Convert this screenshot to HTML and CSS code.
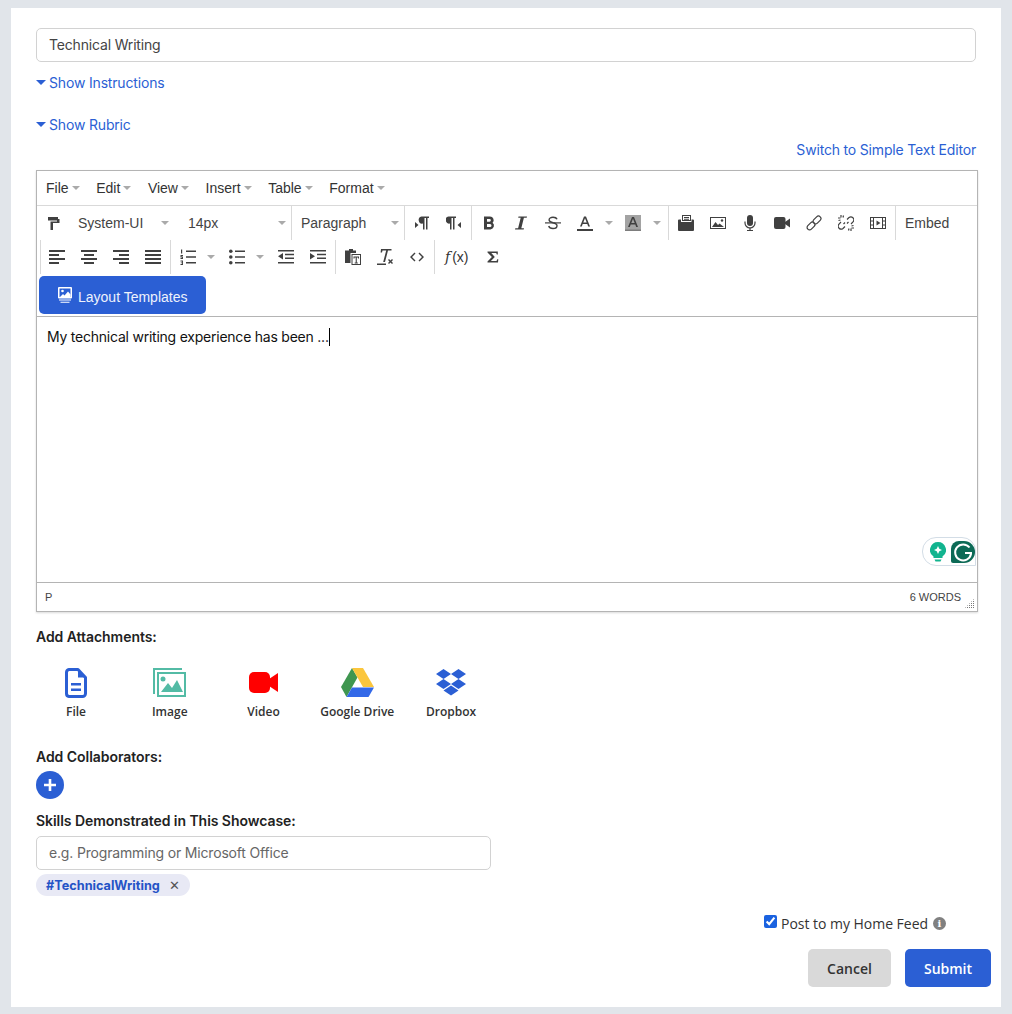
FILE: index.html
```html
<!DOCTYPE html>
<html lang="en">
<head>
<meta charset="utf-8">
<title>Technical Writing</title>
<link rel="stylesheet" href="styles.css">
</head>
<body>
<svg class="sprite" width="0" height="0" aria-hidden="true">
  <symbol id="i-paint" viewBox="0 0 16 16"><path d="M2 2h10v2h1.500v4H7v7H4.500V6.500H11V5.500H2z"/></symbol>
  <symbol id="i-ltr" viewBox="0 0 16 16"><path d="M7.500 1.500H15v1.500h-1.500v11.500H12V3h-1.500v11.500H9V8.500a3.500 3.500 0 0 1-1.500-7zM1 7l3.500 3L1 13z"/></symbol>
  <symbol id="i-rtl" viewBox="0 0 16 16"><path d="M2.500 1.500H10v1.500H8.500v11.500H7V3H5.500v11.500H4V8.500a3.500 3.500 0 0 1-1.500-7zM15 7l-3.500 3 3.500 3z"/></symbol>
  <symbol id="i-bold" viewBox="0 0 16 16"><path fill-rule="evenodd" d="M3 1.500h6a3.700 3.700 0 0 1 2.600 6.300A3.800 3.800 0 0 1 9.500 14.500H3zM6 4v2.700h2.500a1.350 1.350 0 0 0 0-2.700zM6 9v3h3a1.500 1.500 0 0 0 0-3z"/></symbol>
  <symbol id="i-italic" viewBox="0 0 16 16"><path d="M5.500 1.500H14l-.3 1.300h-2.800L8.300 13.200H11l-.3 1.300H2l.3-1.300h2.800L7.700 2.800H5.200z"/></symbol>
  <symbol id="i-strike" viewBox="0 0 16 16"><path d="M0 7.300h16v1.200H0z"/><path d="M12 4.300C11.500 3 10 2.300 8 2.300c-2.300 0-3.900 1-3.900 2.700 0 1.600 1.500 2.100 3.900 2.700 2.400.5 4 1.200 4 3 0 1.800-1.700 2.800-4 2.800-2.200 0-3.900-.9-4.300-2.500" fill="none" stroke="currentColor" stroke-width="1.400"/></symbol>
  <symbol id="i-color" viewBox="0 0 16 16"><path fill-rule="evenodd" d="M7 1.500h2L13 11.500h-1.800l-.9-2.400H5.700l-.9 2.400H3zM6.300 7.600h3.400L8 3.200z"/><path d="M0 14h16v2H0z"/></symbol>
  <symbol id="i-back" viewBox="0 0 16 16"><path d="M0 0h16v16H0z" fill="#a3a3a3"/><path d="M0 14.500h16V16H0z" fill="#7d7d7d"/><path fill-rule="evenodd" d="M7 2h2l4 10h-1.800l-.9-2.400H5.700L4.800 12H3zM6.300 8.100h3.400L8 3.700z"/></symbol>
  <symbol id="i-folder" viewBox="0 0 16 16"><path fill-rule="evenodd" d="M4 0h9v6H4zM5 1v4h7V1z"/><path d="M6 2h5v1H6zM6 3.700h5v1H6z"/><path d="M0 5.500a1 1 0 0 1 1-1h2v2.500h10.500V4.500H15a1 1 0 0 1 1 1V15a1 1 0 0 1-1 1H1a1 1 0 0 1-1-1z"/></symbol>
  <symbol id="i-image" viewBox="0 0 16 16"><path fill-rule="evenodd" d="M0 2h16v12H0zM1 3v10h14V3z"/><path d="M2 12l3.500-5 2.500 3 1.500-1.500L14 12z"/><circle cx="12" cy="5.500" r="1.200"/></symbol>
  <symbol id="i-mic" viewBox="0 0 16 16"><rect x="5" y="0" width="6" height="11" rx="3"/><path d="M3 6.500v1.500a5 5 0 0 0 10 0V6.500" fill="none" stroke="currentColor" stroke-width="1.200"/><path d="M7.400 12.500h1.200V15H11v1H5v-1h2.400z"/></symbol>
  <symbol id="i-video" viewBox="0 0 16 16"><rect x="0" y="2" width="11.500" height="12" rx="2"/><path d="M11 7l5-3.500v9L11 9z"/></symbol>
  <symbol id="i-link" viewBox="0 0 16 16"><g fill="none" stroke="currentColor" stroke-width="1.200"><rect x="6.500" y="2.500" width="9" height="5" rx="2.500" transform="rotate(-45 11 5)"/><rect x=".5" y="8.500" width="9" height="5" rx="2.500" transform="rotate(-45 5 11)"/></g></symbol>
  <symbol id="i-unlink" viewBox="0 0 16 16"><g fill="none" stroke="currentColor" stroke-width="1.200"><path d="M9 4.500l2-2a3 3 0 0 1 4.200 4.200L13 9M10.500 7L9 8.500"/><path d="M7 11.500l-2 2A3 3 0 0 1 .8 9.300L3 7M5.500 9L7 7.500"/><path d="M3 0v2.500M0 3h2.500M5.500 .5l-.5 2M.5 5.500l2-.5M13 16v-2.500M16 13h-2.500M10.500 15.500l.5-2M15.500 10.500l-2 .5"/></g></symbol>
  <symbol id="i-media" viewBox="0 0 16 16"><path fill-rule="evenodd" d="M0 2h16v12H0zM1 3v2.500h2V3zM1 6.500v3h2v-3zM1 10.500V13h2v-2.500zM13 3v2.500h2V3zM13 6.500v3h2v-3zM13 10.500V13h2v-2.500zM4 3v10h8V3z"/><path d="M6.500 5.500L10.500 8l-4 2.500z"/></symbol>
  <symbol id="i-left" viewBox="0 0 16 16"><path d="M0 1h16v2H0zM0 5h10v2H0zM0 9h16v2H0zM0 13h10v2H0z" transform="translate(0 0)"/></symbol>
  <symbol id="i-center" viewBox="0 0 16 16"><path d="M0 1h16v2H0zM3 5h10v2H3zM0 9h16v2H0zM3 13h10v2H3z"/></symbol>
  <symbol id="i-right" viewBox="0 0 16 16"><path d="M0 1h16v2H0zM6 5h10v2H6zM0 9h16v2H0zM6 13h10v2H6z"/></symbol>
  <symbol id="i-justify" viewBox="0 0 16 16"><path d="M0 1h16v2H0zM0 5h16v2H0zM0 9h16v2H0zM0 13h16v2H0z"/></symbol>
  <symbol id="i-num" viewBox="0 0 16 16"><path d="M6 1.500h10v1.600H6zM6 7.200h10v1.600H6zM6 13h10v1.600H6z"/><path d="M1 .5h1.200v4H1zM.5 6h2.500v1.200H1.500v.6H3V10H.5V9h1.600v-.6H.5zM.5 11.500H3V16H.5v-1h1.600v-.7H.8v-.8h1.300v-.9H.5z"/></symbol>
  <symbol id="i-bul" viewBox="0 0 16 16"><circle cx="1.800" cy="2.300" r="1.800"/><circle cx="1.800" cy="8" r="1.800"/><circle cx="1.800" cy="13.700" r="1.800"/><path d="M6 1.500h10v1.600H6zM6 7.200h10v1.600H6zM6 12.900h10v1.600H6z"/></symbol>
  <symbol id="i-out" viewBox="0 0 16 16"><path d="M0 1h16v1.500H0zM7 4.700h9v1.500H7zM7 8.400h9v1.500H7zM0 13h16v1.500H0zM5 4v6.500L0 7.300z"/></symbol>
  <symbol id="i-in" viewBox="0 0 16 16"><path d="M0 1h16v1.500H0zM7 4.700h9v1.500H7zM7 8.400h9v1.500H7zM0 13h16v1.500H0zM0 4v6.500l5-3.200z"/></symbol>
  <symbol id="i-paste" viewBox="0 0 16 16"><path d="M4 0h4v1.500h3V4H5.500v10H0V1.500h4z"/><path fill-rule="evenodd" d="M6.500 5H16v11H6.500zM7.500 6v9H15V6z"/><path d="M8.500 7.500h5.500v2h-1V8.600h-1.200v5h1v.9H9.700v-.9h1v-5H9.500v.9h-1z"/></symbol>
  <symbol id="i-clear" viewBox="0 0 16 16"><path d="M4 0h10.500v1.500H11L8 13H6.200L9.200 1.500H5.500L5 3.500H3.600z"/><path d="M0 14.500h9V16H0zM11 11l1-1 1.500 1.500L15 10l1 1-1.500 1.500L16 14l-1 1-1.500-1.500L12 15l-1-1 1.500-1.500z"/></symbol>
  <symbol id="i-code" viewBox="0 0 16 16"><path d="M5.500 3.500l1 1L3 8l3.500 3.500-1 1L1 8zM10.500 3.500l-1 1L13 8l-3.500 3.500 1 1L15 8z"/></symbol>
  <symbol id="i-sigma" viewBox="0 0 16 16"><path d="M2.500 2.500h10.300v3h-1L11.200 4H6.300l3.500 3.900-3.900 4.100h5.600l.8-1.800h1L13 13.500H2.500v-1L6.900 8 2.500 3.400z"/></symbol>
</svg>

<main class="card">
  <div class="field">Technical Writing</div>
  <a class="toggle toggle-first"><span class="tri"></span>Show Instructions</a>
  <a class="toggle toggle-second"><span class="tri"></span>Show Rubric</a>
  <div class="switch-row"><a class="link">Switch to Simple Text Editor</a></div>

  <section class="editor">
    <nav class="menubar">
      <span class="menu">File<i class="caret"></i></span>
      <span class="menu">Edit<i class="caret"></i></span>
      <span class="menu">View<i class="caret"></i></span>
      <span class="menu">Insert<i class="caret"></i></span>
      <span class="menu">Table<i class="caret"></i></span>
      <span class="menu">Format<i class="caret"></i></span>
    </nav>
    <div class="toolbar">
      <div class="row">
        <div class="group g-font">
          <span class="btn btn-paint"><svg class="ico"><use href="#i-paint"/></svg></span>
          <span class="select sel-family">System-UI<i class="caret caret-end"></i></span>
          <span class="select sel-size">14px<i class="caret caret-end"></i></span>
        </div>
        <div class="group g-block"><span class="select sel-block">Paragraph<i class="caret caret-end"></i></span></div>
        <div class="group g-dir">
          <span class="btn"><svg class="ico"><use href="#i-ltr"/></svg></span>
          <span class="btn"><svg class="ico"><use href="#i-rtl"/></svg></span>
        </div>
        <div class="group g-fmt">
          <span class="btn"><svg class="ico"><use href="#i-bold"/></svg></span>
          <span class="btn"><svg class="ico"><use href="#i-italic"/></svg></span>
          <span class="btn"><svg class="ico"><use href="#i-strike"/></svg></span>
          <span class="btn"><svg class="ico"><use href="#i-color"/></svg></span><i class="caret caret-split"></i>
          <span class="btn"><svg class="ico"><use href="#i-back"/></svg></span><i class="caret caret-split"></i>
        </div>
        <div class="group g-ins">
          <span class="btn"><svg class="ico"><use href="#i-folder"/></svg></span>
          <span class="btn"><svg class="ico"><use href="#i-image"/></svg></span>
          <span class="btn"><svg class="ico"><use href="#i-mic"/></svg></span>
          <span class="btn"><svg class="ico"><use href="#i-video"/></svg></span>
          <span class="btn"><svg class="ico"><use href="#i-link"/></svg></span>
          <span class="btn"><svg class="ico"><use href="#i-unlink"/></svg></span>
          <span class="btn"><svg class="ico"><use href="#i-media"/></svg></span>
        </div>
        <div class="group g-last"><span class="embed">Embed</span></div>
      </div>
      <div class="row row-two">
        <div class="group g-align">
          <span class="btn"><svg class="ico"><use href="#i-left"/></svg></span>
          <span class="btn"><svg class="ico"><use href="#i-center"/></svg></span>
          <span class="btn"><svg class="ico"><use href="#i-right"/></svg></span>
          <span class="btn"><svg class="ico"><use href="#i-justify"/></svg></span>
        </div>
        <div class="group g-list">
          <span class="btn"><svg class="ico"><use href="#i-num"/></svg></span><i class="caret caret-split caret-list"></i>
          <span class="btn"><svg class="ico"><use href="#i-bul"/></svg></span><i class="caret caret-split caret-list"></i>
          <span class="btn"><svg class="ico"><use href="#i-out"/></svg></span>
          <span class="btn"><svg class="ico"><use href="#i-in"/></svg></span>
        </div>
        <div class="group g-misc">
          <span class="btn"><svg class="ico"><use href="#i-paste"/></svg></span>
          <span class="btn"><svg class="ico"><use href="#i-clear"/></svg></span>
          <span class="btn"><svg class="ico"><use href="#i-code"/></svg></span>
        </div>
        <div class="group g-last g-math">
          <span class="fx"><em>f</em>(x)</span>
          <span class="btn"><svg class="ico"><use href="#i-sigma"/></svg></span>
        </div>
      </div>
      <button class="templates">
        <svg class="tpl-ico" viewBox="0 0 14 16"><path fill="#fff" fill-rule="evenodd" d="M1 0h12a1 1 0 0 1 1 1v9.500a1 1 0 0 1-1 1H1a1 1 0 0 1-1-1V1a1 1 0 0 1 1-1zM1.500 1.500v8.500h11V1.500z"/><circle cx="4.500" cy="4" r="1.300" fill="#fff"/><path fill="#fff" d="M2 10l3-3 1.500 1.500L10 4.500l2.500 3V10zM1 12.500h12v1H1zM2.500 14.700h9v1h-9z"/></svg>
        Layout Templates
      </button>
    </div>
    <div class="content">
      <p class="text">My technical writing experience has been ...<span class="cursor"></span></p>
      <div class="grammarly">
        <svg class="g-bulb" viewBox="0 0 16 20"><path fill="#12b48f" d="M8 0a8 8 0 0 1 4.500 14.600V16h-9v-1.400A8 8 0 0 1 8 0zM4.500 17.500h7l-1 2h-5z"/><path fill="#fff" d="M8 4l1.300 2.700L12 8l-2.700 1.300L8 12 6.700 9.300 4 8l2.700-1.300z"/></svg>
        <span class="g-mark"><svg viewBox="0 0 24 22"><path fill="none" stroke="#fff" stroke-width="2" d="M18.500 6.500A8 8 0 1 0 20 13v-1h-6"/></svg></span>
      </div>
    </div>
    <footer class="status">
      <span>P</span>
      <span class="words">6 WORDS</span>
      <span class="grip"></span>
    </footer>
  </section>

  <h3 class="label label-attach">Add Attachments:</h3>
  <div class="attachments">
    <div class="att att-file">
      <svg class="att-ico" width="22" height="30" viewBox="0 0 22 30"><path fill="none" stroke="#2b5fd4" stroke-width="3" stroke-linejoin="round" d="M4 1.500h9l7.500 8V25.500a3 3 0 0 1-3 3H4a3 3 0 0 1-2.500-3V4.500a3 3 0 0 1 2.500-3z"/><path fill="#2b5fd4" d="M13 1.500l7.500 8H13zM6 15h10v2.500H6zM6 20.500h10V23H6z"/></svg>
      <span>File</span>
    </div>
    <div class="att">
      <svg class="att-ico" width="33" height="29" viewBox="0 0 33 29"><path fill="#53bba5" d="M0 0h29v2H2v24H0z"/><path fill="none" stroke="#53bba5" stroke-width="2" d="M5 5h27v23H5z"/><circle cx="10" cy="11" r="2.500" fill="#53bba5"/><path fill="#53bba5" d="M8 24l7-9 4 5 5-8 6 12z"/></svg>
      <span>Image</span>
    </div>
    <div class="att">
      <svg class="att-ico" width="29" height="29" viewBox="0 0 29 29"><rect x="0" y="4" width="21" height="21" rx="5" fill="#f00"/><path fill="#f00" d="M20 11l9-6v19l-9-6z"/></svg>
      <span>Video</span>
    </div>
    <div class="att">
      <svg class="att-ico" width="33" height="29" viewBox="0 0 33 29"><path fill="#3f9650" d="M11 0l5.500 9.500L5.500 29 0 19z"/><path fill="#fbc63d" d="M11 0h11l11 19H22z"/><path fill="#3369e8" d="M11 19.500h22L27.500 29h-22z"/></svg>
      <span>Google Drive</span>
    </div>
    <div class="att">
      <svg class="att-ico" width="30" height="29" viewBox="0 0 30 29"><path fill="#2b5fd4" d="M7.500 1L15 6 7.500 11 0 6zM22.500 1L30 6l-7.500 5L15 6zM7.500 11L15 16l-7.500 5L0 16zM22.500 11L30 16l-7.500 5L15 16zM15 17.500l7.500 5L15 27.500l-7.500-5z"/></svg>
      <span>Dropbox</span>
    </div>
  </div>

  <h3 class="label label-collab">Add Collaborators:</h3>
  <button class="plus" aria-label="Add collaborator"><svg width="12" height="12" viewBox="0 0 12 12"><path fill="#fff" d="M4.700 0h2.600v4.700H12v2.600H7.300V12H4.700V7.300H0V4.700h4.700z"/></svg></button>
  <h3 class="label label-skills">Skills Demonstrated in This Showcase:</h3>
  <div class="field field-skill">e.g. Programming or Microsoft Office</div>
  <div class="tag-row"><span class="tag">#TechnicalWriting<span class="tag-x">✕</span></span></div>

  <div class="post-row">
    <input class="check" type="checkbox" checked>
    <span class="post-label">Post to my Home Feed</span>
    <span class="info">i</span>
  </div>
  <div class="actions">
    <button class="action cancel">Cancel</button>
    <button class="action submit">Submit</button>
  </div>
</main>
</body>
</html>
```

FILE: styles.css
```css
* { box-sizing: border-box; }
html, body { margin: 0; }
body {
  background: #e1e5ea;
  padding: 8px 11px 7px;
  font-family: Inter, "Liberation Sans", sans-serif;
  color: #222;
}
.sprite { position: absolute; }
.card {
  background: #fff;
  height: 999px;
  padding: 20px 25px 0;
}
.field {
  height: 34px;
  border: 1px solid #d2d2d2;
  border-radius: 5px;
  padding: 0 12px;
  font-size: 14px;
  letter-spacing: -0.17px;
  line-height: 32px;
  color: #444;
}
.toggle {
  display: flex;
  align-items: center;
  height: 20px;
  font-size: 14px;
  letter-spacing: -0.17px;
  color: #2b5fd4;
}
.toggle-first { margin-top: 10px; }
.toggle-second { margin-top: 22px; }
.tri {
  width: 0;
  height: 0;
  margin-right: 3px;
  border: 5px solid transparent;
  border-top: 5px solid #2b5fd4;
  border-bottom: 0;
  margin-top: 1px;
}
.switch-row {
  display: flex;
  justify-content: flex-end;
  margin-top: 6px;
  height: 20px;
  line-height: 20px;
}
.link { font-size: 14px; letter-spacing: -0.18px; color: #2b5fd4; }

.editor {
  margin: 10px -2px 0 0;
  height: 442px;
  border: 1px solid #b4b4b4;
  box-shadow: 0 1px 2px rgba(0, 0, 0, .15);
  font-family: "Liberation Sans", sans-serif;
  color: #333;
  display: flex;
  flex-direction: column;
}
.menubar {
  height: 35px;
  flex: none;
  display: flex;
  align-items: center;
  gap: 16.600px;
  padding-left: 9px;
  border-bottom: 1px solid #d9d9d9;
  font-size: 14px;
}
.menu { display: flex; align-items: center; }
.caret {
  display: inline-block;
  width: 0;
  height: 0;
  margin-left: 3px;
  border: 4px solid transparent;
  border-top: 4px solid #aaa;
  border-bottom: 0;
}
.toolbar { height: 111px; flex: none; border-bottom: 1px solid #b4b4b4; }
.row { display: flex; height: 34px; }
.row-two { padding-left: 3px; }
.group {
  display: flex;
  align-items: center;
  height: 34px;
  border-right: 1px solid #d9d9d9;
}
.g-last { border-right: 0; }
.g-font { width: 255px; }
.g-block { width: 113px; }
.g-dir { width: 67px; padding-left: 1px; }
.g-fmt { width: 197px; padding-left: 1px; }
.g-ins { width: 227px; padding-left: 1px; }
.row-two .group:first-child { border-left: 1px solid #d9d9d9; width: 131px; padding-left: 0; }
.g-list { width: 165px; padding-left: 1px; }
.g-misc { width: 99px; padding-left: 1px; }
.btn {
  width: 32px;
  height: 34px;
  flex: none;
  display: flex;
  align-items: center;
  justify-content: center;
  color: #404040;
}
.btn-paint { width: 34px; }
.ico { width: 16px; height: 16px; fill: currentColor; color: inherit; }
.select {
  position: relative;
  display: block;
  font-size: 14px;
  line-height: 34px;
  color: #444;
}
.sel-family { width: 104px; padding-left: 7px; }
.sel-size { width: 116px; padding-left: 13px; }
.sel-block { width: 112px; padding-left: 9px; }
.caret-end { position: absolute; top: 15px; margin: 0; right: 5px; }
.sel-family .caret-end { right: 6px; }
.caret-split { flex: none; margin: 0 4px; }
.caret-list { margin: 0 6px 0 3px; }
.embed { font-size: 14px; padding-left: 9px; color: #444; }
.fx {
  width: 42px;
  flex: none;
  padding-left: 10px;
  font-family: "Liberation Sans", sans-serif;
  font-size: 14px;
  color: #333;
}
.fx em { margin-right: 2px; font-family: "DejaVu Serif", serif; }
.templates {
  display: flex;
  align-items: center;
  gap: 6px;
  width: 167px;
  height: 38px;
  margin: 2px 0 0 2px;
  padding: 4px 0 0 19px;
  border: 0;
  border-radius: 5px;
  background: #2b5fd4;
  color: #eef2fc;
  font-family: "Liberation Sans", sans-serif;
  font-size: 14px;
}
.tpl-ico { width: 14px; height: 16px; margin-top: -4px; }
.content { position: relative; flex: 1; padding: 11px 10px; }
.text { margin: 0; font-family: Inter, sans-serif; font-size: 14px; letter-spacing: -0.23px; line-height: 17px; color: #111; }
.cursor {
  display: inline-block;
  width: 1px;
  height: 18px;
  margin-left: 0;
  background: #000;
  vertical-align: -4px;
}
.grammarly {
  position: absolute;
  right: 1px;
  bottom: 16px;
  width: 54px;
  height: 29px;
  display: flex;
  align-items: center;
  padding-left: 7px;
  gap: 5px;
  border: 1px solid #d3dde6;
  border-radius: 14px 14px 0 14px;
  background: #fff;
}
.g-bulb { width: 16px; height: 20px; }
.g-mark {
  display: block;
  width: 24px;
  height: 22px;
  border-radius: 8px 11px 11px 2px;
  background: #0c6a56;
}
.g-mark svg { display: block; width: 24px; height: 22px; }
.status {
  position: relative;
  height: 29px;
  flex: none;
  display: flex;
  align-items: center;
  justify-content: space-between;
  padding: 0 16px 0 8px;
  border-top: 1px solid #b4b4b4;
  font-size: 11px;
  color: #444;
}
.grip {
  position: absolute;
  right: 3px;
  bottom: 2px;
  width: 10px;
  height: 10px;
  background: conic-gradient(#777 25%, transparent 0) 0 0 / 2px 2px;
  clip-path: polygon(100% 0, 100% 100%, 0 100%);
}

.label {
  margin: 0;
  font-size: 14px;
  font-weight: 600;
  letter-spacing: -0.05px;
  line-height: 20px;
  color: #222;
}
.label-attach { margin-top: 15px; }
.attachments { display: flex; gap: 13.750px; margin-top: 21px; }
.att {
  width: 80px;
  display: flex;
  flex-direction: column;
  align-items: center;
  font-family: "Open Sans", sans-serif;
  font-size: 12px;
  font-weight: 600;
  line-height: 16px;
  color: #333;
  white-space: nowrap;
}
.att-ico { display: block; margin-bottom: 7px; }
.att-file .att-ico { margin-bottom: 6px; }
.label-collab { margin-top: 27px; }
.plus {
  display: flex;
  align-items: center;
  justify-content: center;
  width: 28px;
  height: 28px;
  margin-top: 4px;
  padding: 0;
  border: 0;
  border-radius: 50%;
  background: #2b5fd4;
}
.label-skills { margin-top: 12px; }
.field-skill { width: 455px; margin-top: 5px; color: #666; }
.tag-row { margin-top: 4px; height: 22px; }
.tag {
  display: inline-flex;
  align-items: center;
  width: 154px;
  height: 22px;
  padding: 1px 0 0 10px;
  border-radius: 11px;
  background: #e8e9f5;
  font-size: 12.700px;
  font-weight: 700;
  color: #2453c6;
  white-space: nowrap;
}
.tag-x { margin: -2px 0 0 9px; font-size: 13px; font-weight: 400; color: #555; }
.post-row {
  display: flex;
  align-items: center;
  height: 20px;
  margin: 17px 30px 0 0;
  justify-content: flex-end;
  font-family: "Open Sans", sans-serif;
  font-size: 14px;
  letter-spacing: -0.03px;
  color: #333;
}
.check { width: 13px; height: 13px; margin: 0 4px 3px 0; accent-color: #1a62e0; }
.info {
  display: flex;
  align-items: center;
  justify-content: center;
  width: 13px;
  height: 13px;
  margin-left: 5px;
  border-radius: 50%;
  background: #808080;
  color: #fff;
  font-family: "DejaVu Serif", serif;
  font-size: 10px;
  font-weight: 700;
}
.actions {
  display: flex;
  justify-content: flex-end;
  gap: 14px;
  margin: 16px -15px 0 0;
}
.action {
  height: 38px;
  border: 0;
  border-radius: 5px;
  font-family: "Open Sans", sans-serif;
  font-size: 14px;
  font-weight: 600;
}
.cancel { width: 83px; background: #d9d9d9; color: #333; }
.submit { width: 86px; background: #2b5fd4; color: #fff; }
```
